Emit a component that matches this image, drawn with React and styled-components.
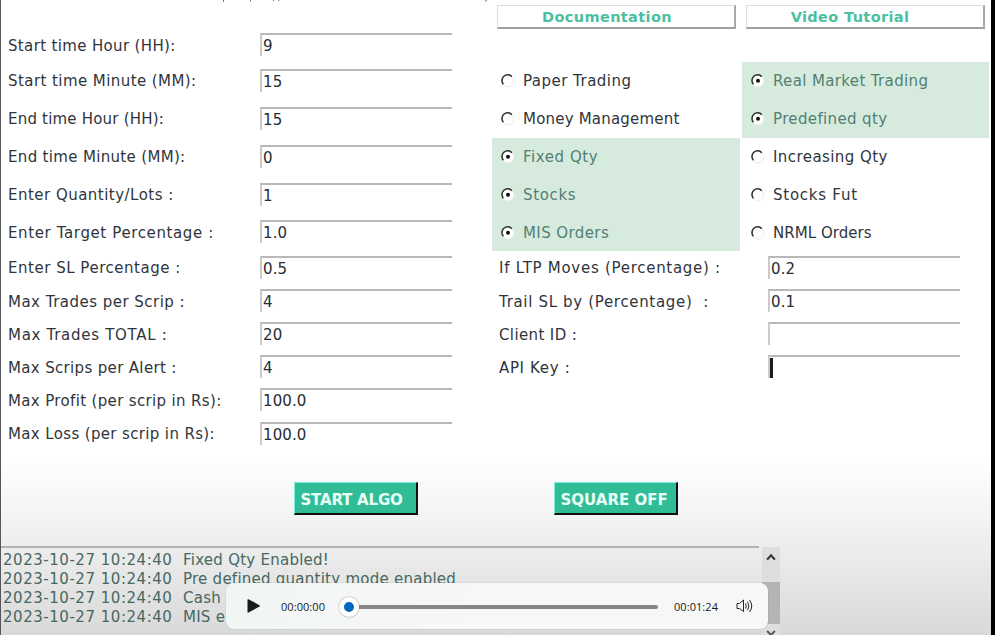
import React from "react";
import styled, { createGlobalStyle, css } from "styled-components";

const Global = createGlobalStyle`
  * { box-sizing: border-box; }
  body { margin: 0; }
`;

const Window = styled.div`
  position: relative;
  width: 995px;
  height: 635px;
  overflow: hidden;
  display: flex;
  flex-direction: column;
  border-left: 1px solid #55565a;
  border-right: 4px solid #000;
  background: linear-gradient(#fff 0 455px, #f1f1f1 530px, #d9d9d9 635px);
  font: 15px/20px "DejaVu Sans", Verdana, sans-serif;
  color: #30353c;
`;

const Form = styled.div`
  display: grid;
  grid-template-columns: 259px 232px 248px 247px;
  grid-template-rows: 29px 33px 38px 38px 38px 38px 37px 34px 33px 33px 33px 33px 34px;
  height: 451px;
`;

const Cell = styled.div`
  grid-column: ${(p) => p.$col};
  grid-row: ${(p) => p.$row};
  display: flex;
  align-items: center;
  min-width: 0;
`;

const Label = styled.span`
  padding-left: 7px;
  white-space: pre;
  letter-spacing: ${(p) => p.$track}px;
`;

const Field = styled.div`
  width: 192px;
  height: 23px;
  margin: 0 0 2px ${(p) => p.$indent || 0}px;
  padding: 1px 0 0 1px;
  border-top: 2px solid #b8b8b8;
  border-left: 2px solid #cbcbcb;
  line-height: 20px;
  color: #252c34;
  letter-spacing: 0.1px;
`;

const Caret = styled.span`
  display: block;
  width: 3px;
  height: 20px;
  margin-left: -1px;
  background: #1c1c20;
`;

const Option = styled(Cell)`
  gap: 8px;
  padding-left: 9px;
  margin-left: ${(p) => (p.$col === 4 ? 2 : 0)}px;
  margin-right: ${(p) => (p.$col === 4 ? -2 : 0)}px;
  white-space: nowrap;
  letter-spacing: ${(p) => p.$track}px;
  ${(p) => p.$on && css`
    background: #d6ebdd;
    color: #527f74;
  `}
`;

const Link = styled.div`
  grid-column: ${(p) => p.$col};
  grid-row: 1;
  width: 239px;
  height: 24px;
  margin: 5px 0 0 ${(p) => (p.$col === 3 ? 5 : 6)}px;
  padding-right: ${(p) => (p.$col === 3 ? 18 : 30)}px;
  border: 1px solid #dedede;
  border-right: 2px solid #a8a8a8;
  border-bottom: 2px solid #a0a0a0;
  text-align: center;
  font-weight: bold;
  font-size: 14.5px;
  line-height: 22px;
  letter-spacing: 0.37px;
  color: #4cbfa0;
`;

const Actions = styled.div`
  display: flex;
  gap: 136px;
  padding: 31px 0 0 293px;
`;

const ActionButton = styled.div`
  width: 124px;
  height: 33px;
  padding-left: 5.5px;
  background: #30bc96;
  border: 2px solid #111;
  border-top: 1px solid #78f0dc;
  border-left: 1px solid #78f0dc;
  color: #e8fff6;
  font-weight: bold;
  line-height: 34px;
  white-space: nowrap;
  letter-spacing: ${(p) => p.$track}px;
`;

const LogPanel = styled.div`
  display: flex;
  margin-top: 31px;
  height: 89px;
`;

const LogText = styled.div`
  width: 758px;
  padding: 3px 0 0 2px;
  border-top: 2px solid #b4b4b4;
  line-height: 19px;
  color: #456860;
`;

const LogLine = styled.div`
  display: flex;
  white-space: pre;
  letter-spacing: 0.25px;
`;

const Stamp = styled.span`
  width: 180px;
  letter-spacing: 0.53px;
`;

const Scroll = styled.div`
  display: flex;
  flex-direction: column;
  align-items: center;
  width: 18px;
  margin: 1px 0 0 3px;
  background: #dedede;
`;

const ScrollThumb = styled.div`
  width: 18px;
  height: 43px;
  margin: 15px 0 5px;
  background: #b4b4b4;
`;

const Player = styled.div`
  position: absolute;
  left: 225px;
  top: 583px;
  width: 542px;
  height: 46px;
  display: flex;
  align-items: center;
  border-radius: 8px;
  background: linear-gradient(100deg, #f0f6f4, #f7f7f7 45%);
  box-shadow: 0 0 1px rgba(0, 0, 0, 0.35);
  color: #1b1b1b;
  font: 11px/16px "Open Sans", "Noto Sans", sans-serif;
`;

const PlayIcon = styled.svg`
  margin: 0 20px;
  flex: none;
`;

const Time = styled.span`
  width: 46px;
  padding-top: 1px;
  letter-spacing: 0.06px;
  white-space: nowrap;
`;

const Slider = styled.div`
  display: flex;
  align-items: center;
  width: 319px;
  margin: 1px 16px 0 12px;
`;

const Thumb = styled.span`
  width: 20px;
  height: 20px;
  flex: none;
  border: 5px solid #fff;
  border-radius: 50%;
  background: #0067c0;
  box-shadow: 0 0 1px 0.5px rgba(0, 0, 0, 0.25);
`;

const Track = styled.span`
  flex: 1;
  height: 4px;
  border-radius: 0 2px 2px 0;
  background: #868686;
`;

const VolumeIcon = styled.svg`
  margin-left: 16px;
  flex: none;
`;

const Descenders = styled.svg`
  position: absolute;
  left: 0;
  top: 0;
`;

function Radio({ on }) {
  return (
    <svg width="14" height="14" viewBox="0 0 14 14">
      <circle cx="7" cy="7" r="6" fill="#fcfffd" stroke="#e9edeb" />
      <path d="M2.4 10.2A5.600 5.600 0 0 1 10.800 2.7" fill="none" stroke="#2b2f2d" strokeWidth="1.5" />
      {on && <circle cx="7" cy="6.8" r="2" fill="#111" />}
    </svg>
  );
}

// Each text is followed by its letter spacing in pixels.
const settings = [
  ["Start time Hour (HH):", 0.35, "9"],
  ["Start time Minute (MM):", 0.43, "15"],
  ["End time Hour (HH):", 0.2, "15"],
  ["End time Minute (MM):", 0.33, "0"],
  ["Enter Quantity/Lots :", 0.48, "1"],
  ["Enter Target Percentage :", 0.62, "1.0"],
  ["Enter SL Percentage :", 0.52, "0.5"],
  ["Max Trades per Scrip :", 0.48, "4"],
  ["Max Trades TOTAL :", 0.7, "20"],
  ["Max Scrips per Alert :", 0.34, "4"],
  ["Max Profit (per scrip in Rs):", 0.35, "100.0"],
  ["Max Loss (per scrip in Rs):", 0.36, "100.0"],
];

const options = [
  [["Paper Trading", 0.47, false], ["Real Market Trading", 0.36, true]],
  [["Money Management", 0.2, false], ["Predefined qty", 0.36, true]],
  [["Fixed Qty", 0.55, true], ["Increasing Qty", 0.43, false]],
  [["Stocks", 0.65, true], ["Stocks Fut", 0.75, false]],
  [["MIS Orders", 0.4, true], ["NRML Orders", 0.05, false]],
];

const account = [
  ["If LTP Moves (Percentage) :", 0.72, "0.2"],
  ["Trail SL by (Percentage)  :", 0.67, "0.1"],
  ["Client ID :", 0.38, ""],
  ["API Key :", 0.65, null],
];

const log = [
  "Fixed Qty Enabled!",
  "Pre defined quantity mode enabled",
  "Cash",
  "MIS e",
];

export default function App() {
  return (
    <Window>
      <Global />
      <Form>
        <Link $col={3}>Documentation</Link>
        <Link $col={4}>Video Tutorial</Link>
        {settings.map(([label, track, value], i) => (
          <React.Fragment key={label}>
            <Cell $col={1} $row={i + 2}><Label $track={track}>{label}</Label></Cell>
            <Cell $col={2} $row={i + 2}><Field>{value}</Field></Cell>
          </React.Fragment>
        ))}
        {options.map((pair, i) =>
          pair.map(([text, track, on], j) => (
            <Option key={text} $col={j + 3} $row={i + 3} $track={track} $on={on}>
              <Radio on={on} />
              {text}
            </Option>
          ))
        )}
        {account.map(([label, track, value], i) => (
          <React.Fragment key={label}>
            <Cell $col={3} $row={i + 8}><Label $track={track}>{label}</Label></Cell>
            <Cell $col={4} $row={i + 8}>
              <Field $indent={28}>{value === null ? <Caret /> : value}</Field>
            </Cell>
          </React.Fragment>
        ))}
      </Form>
      <Actions>
        <ActionButton $track={-0.2}>START ALGO</ActionButton>
        <ActionButton $track={0}>SQUARE OFF</ActionButton>
      </Actions>
      <LogPanel>
        <LogText>
          {log.map((message) => (
            <LogLine key={message}>
              <Stamp>2023-10-27 10:24:40</Stamp>
              {message}
            </LogLine>
          ))}
        </LogText>
        <Scroll>
          <svg width="10" height="21" viewBox="0 0 10 21">
            <path d="M1 13L5 8.5L9 13" fill="none" stroke="#333" strokeWidth="2.2" />
          </svg>
          <ScrollThumb />
          <svg width="10" height="6" viewBox="0 0 10 6">
            <path d="M1 2L5 6L9 2" fill="none" stroke="#555" strokeWidth="2" />
          </svg>
        </Scroll>
      </LogPanel>
      <Descenders width="500" height="3" viewBox="0 0 500 3">
        <path d="M222.500 0V2M249.500 0V1.500M272.500 0V1M278 0V1M484 1.500L486 0" stroke="#777" fill="none" />
      </Descenders>
      <Player>
        <PlayIcon width="15" height="16" viewBox="0 0 15 16">
          <path d="M1.500 1.800Q1.500 .8 2.500 1.300L13.500 7.200Q14.400 8 13.500 8.500L2.500 14.600Q1.500 15 1.500 14Z" fill="#1b1b1b" />
        </PlayIcon>
        <Time>00:00:00</Time>
        <Slider><Thumb /><Track /></Slider>
        <Time>00:01:24</Time>
        <VolumeIcon width="18" height="16" viewBox="0 0 18 16" fill="none" stroke="#222" strokeWidth="1">
          <path d="M1 5.500H3.500L7.500 2V13.500L3.500 10.500H1ZM9.500 5.500Q11 8 9.500 10.500M11.500 3.700Q14.300 8 11.500 12.200M13.500 2Q18 8 13.500 14" />
        </VolumeIcon>
      </Player>
    </Window>
  );
}
